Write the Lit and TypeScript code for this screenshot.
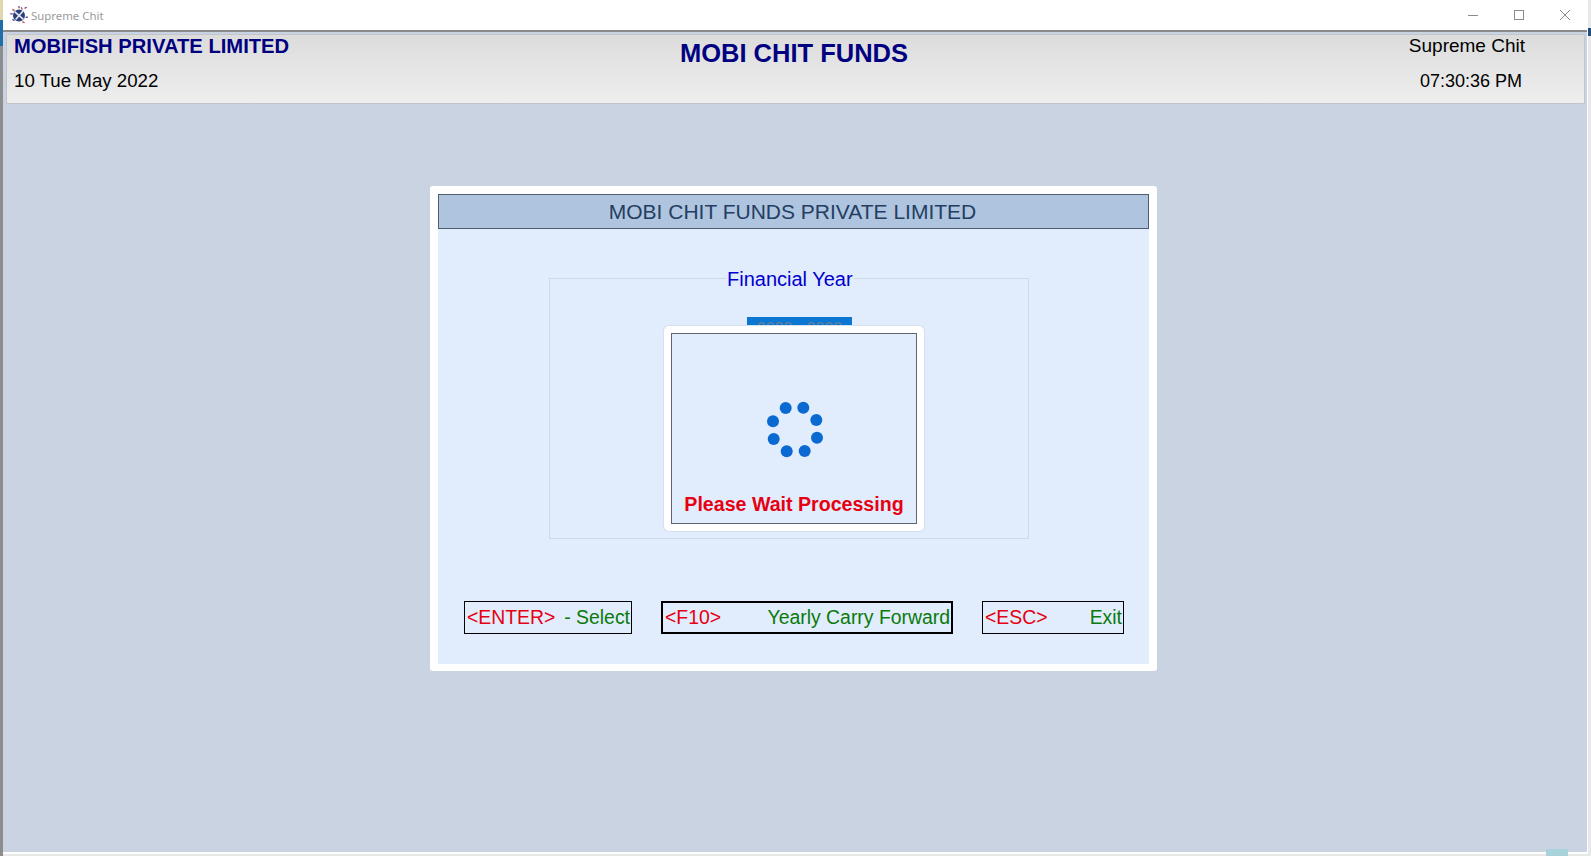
import { LitElement, html, css, svg } from "lit";
import { customElement } from "lit/decorators.js";

const DOTS = [
  [20.7, 8], [38.3, 7.7], [51.3, 20], [52, 37.7],
  [39.7, 51], [21.7, 51.3], [8.7, 39], [8, 21.3],
];

@customElement("app-root")
export class AppRoot extends LitElement {
  static styles = css`
    :host {
      display: block;
      width: 1591px;
      height: 856px;
      overflow: hidden;
      position: relative;
      background: #e8e8e8;
      font-family: "Liberation Sans", Arial, sans-serif;
    }
    .window {
      box-sizing: border-box;
      width: 1585px;
      height: 854px;
      margin-left: 3px;
      display: flex;
      flex-direction: column;
      background: #c9d3e2;
      border-right: 1px solid #fff;
      border-bottom: 2px solid #fdfdfd;
    }
    .titlebar {
      height: 30px;
      flex: none;
      display: flex;
      align-items: center;
      background: #fff;
      border-bottom: 2px solid #8a8a8a;
      box-sizing: content-box;
      padding-left: 6px;
    }
    .logo { width: 20px; height: 20px; flex: none; }
    .app-title {
      font: 11.4px "Noto Sans", "Open Sans", sans-serif;
      color: #9a9a9a;
      margin-left: 2px;
    }
    .win-btns {
      margin-left: auto;
      display: flex;
      align-items: center;
      gap: 36px;
      padding-right: 17px;
    }
    .win-btns svg { width: 10px; height: 10px; display: block; }
    .header {
      flex: none;
      box-sizing: border-box;
      height: 70px;
      margin: 2px 2px 0 3px;
      border: 1px solid #c2c6cc;
      border-radius: 2px;
      background: linear-gradient(#dcdcdc, #eeeeee);
      display: grid;
      grid-template-columns: 1fr 1fr 1fr;
    }
    .h-left, .h-right { display: flex; flex-direction: column; }
    .h-left { padding-left: 7px; }
    .company {
      font-size: 20.2px;
      font-weight: bold;
      color: #000080;
      line-height: 24px;
      margin-top: -1px;
      white-space: nowrap;
    }
    .date {
      font-size: 18.7px;
      line-height: 24px;
      color: #000;
      margin-top: 11px;
      white-space: nowrap;
    }
    .h-center {
      text-align: center;
      font-size: 25.5px;
      font-weight: bold;
      color: #000080;
      line-height: 30px;
      padding: 3px 3px 0 0;
      white-space: nowrap;
    }
    .h-right { align-items: flex-end; padding-right: 59px; }
    .right-top {
      font-size: 19px;
      line-height: 24px;
      color: #000;
      margin-top: -1px;
      white-space: nowrap;
    }
    .right-line {
      font-size: 18px;
      line-height: 24px;
      color: #000;
      margin: 11px 3px 0 0;
      white-space: nowrap;
    }
    .stage {
      flex: 1;
      padding: 82px 0 0 427px;
    }
    .dialog {
      box-sizing: border-box;
      width: 727px;
      height: 485px;
      border: 8px solid #fff;
      border-bottom-width: 7px;
      border-radius: 3px;
      background: #e1ecfd;
      display: flex;
      flex-direction: column;
    }
    .dlg-title {
      box-sizing: border-box;
      height: 35px;
      flex: none;
      background: #afc4de;
      border: 1px solid #4e5d6c;
      padding-right: 2px;
      text-align: center;
      font-size: 21px;
      line-height: 33px;
      color: #243e63;
    }
    .fs-wrap {
      box-sizing: border-box;
      width: 480px;
      height: 261px;
      margin: 49px 0 0 111px;
      border: 1px solid #cfd9e6;
      position: relative;
      flex: none;
    }
    .legend {
      position: absolute;
      top: -11px;
      left: 176px;
      padding: 0 1px;
      background: #e1ecfd;
      color: #0000cd;
      font-size: 20px;
      line-height: 22px;
      white-space: nowrap;
    }
    .year {
      position: absolute;
      left: 197px;
      top: 38px;
      width: 105px;
      height: 24px;
      background: #0a78d2;
      color: #5f7fa0;
      font-size: 16px;
      line-height: 24px;
      text-align: center;
      overflow: hidden;
    }
    .wait {
      position: absolute;
      left: 114px;
      top: 47px;
      box-sizing: border-box;
      width: 260px;
      height: 205px;
      border: 7px solid #fff;
      border-radius: 5px;
      box-shadow: 0 0 0 1px #d5e0ee;
      background: #e1ecfd;
    }
    .wait-inner {
      box-sizing: border-box;
      height: 100%;
      border: 1px solid #5f6570;
      display: flex;
      flex-direction: column;
      align-items: center;
    }
    .spinner { width: 60px; height: 60px; margin: 66px 0 0 1px; flex: none; }
    .wait-text {
      color: #e60012;
      font-size: 19.6px;
      font-weight: bold;
      line-height: 24px;
      margin-top: 32px;
      white-space: nowrap;
    }
    .keys {
      margin-top: 62px;
      display: flex;
      flex: none;
      padding-left: 26px;
      gap: 29px;
    }
    .key {
      box-sizing: border-box;
      height: 33px;
      border: 1px solid #000;
      display: flex;
      justify-content: space-between;
      align-items: center;
      padding: 0 1px 0 2px;
      font-size: 19.4px;
      white-space: nowrap;
    }
    .key.active { border-width: 2px; }
    .k-enter { width: 168px; }
    .k-f10 { width: 292px; }
    .k-esc { width: 142px; }
    .red { color: #e60012; }
    .green { color: #0a7a0a; }
    .edge-a { position: absolute; left: 0; top: 0; width: 3px; height: 20px; background: #e2d6ae; }
    .edge-b { position: absolute; left: 0; top: 20px; width: 3px; height: 26px; background: #1f6ea8; }
    .edge-c { position: absolute; left: 0; top: 46px; width: 3px; height: 810px; background: #8d8d8d; }
    .edge-d { position: absolute; left: 1546px; top: 849px; width: 22px; height: 7px; background: #a9d3dc; }
    .edge-e { position: absolute; left: 1588px; top: 28px; width: 3px; height: 8px; background: #1f4f7f; }
  `;

  render() {
    return html`
      <div class="edge-a"></div><div class="edge-b"></div><div class="edge-c"></div><div class="edge-d"></div><div class="edge-e"></div>
      <div class="window">
        <div class="titlebar">
          <svg class="logo" viewBox="0 0 18 18">
            <circle cx="9" cy="9.5" r="5.4" fill="#2b3f78"/>
            <path d="M5 6l8 7M13 5l-7 8" stroke="#e8ecf6" stroke-width="1.4" fill="none"/>
            <path d="M1 8h2.5M14 3l2-1M3 13l2 1M9 1v2M15 11h2" stroke="#6b4aa0" stroke-width="1.2" fill="none"/>
            <path d="M11 2l1 2M3 4l2 1M12 15l2 1" stroke="#c2483c" stroke-width="1.2" fill="none"/>
          </svg>
          <span class="app-title">Supreme Chit</span>
          <div class="win-btns">
            <svg viewBox="0 0 10 10"><path d="M0 5.5h10" stroke="#8c8c8c" fill="none"/></svg>
            <svg viewBox="0 0 10 10"><rect x=".5" y=".5" width="9" height="9" stroke="#8c8c8c" fill="none"/></svg>
            <svg viewBox="0 0 10 10"><path d="M0 0l10 10M10 0L0 10" stroke="#8c8c8c" fill="none"/></svg>
          </div>
        </div>
        <div class="header">
          <div class="h-left">
            <div class="company">MOBIFISH PRIVATE LIMITED</div>
            <div class="date">10 Tue May 2022</div>
          </div>
          <div class="h-center">MOBI CHIT FUNDS</div>
          <div class="h-right">
            <div class="right-top">Supreme Chit</div>
            <div class="right-line">07:30:36 PM</div>
          </div>
        </div>
        <div class="stage">
          <div class="dialog">
            <div class="dlg-title">MOBI CHIT FUNDS PRIVATE LIMITED</div>
            <div class="fs-wrap">
              <div class="legend">Financial Year</div>
              <div class="year">2022 - 2023</div>
              <div class="wait">
                <div class="wait-inner">
                  <svg class="spinner" viewBox="0 0 60 60">
                    ${DOTS.map(([x, y]) => svg`<circle cx=${x} cy=${y} r="6" fill="#0a6ad2"></circle>`)}
                  </svg>
                  <div class="wait-text">Please Wait Processing</div>
                </div>
              </div>
            </div>
            <div class="keys">
              <div class="key k-enter"><span class="red">&lt;ENTER&gt;</span><span class="green">- Select</span></div>
              <div class="key k-f10 active"><span class="red">&lt;F10&gt;</span><span class="green">Yearly Carry Forward</span></div>
              <div class="key k-esc"><span class="red">&lt;ESC&gt;</span><span class="green">Exit</span></div>
            </div>
          </div>
        </div>
      </div>
    `;
  }
}
